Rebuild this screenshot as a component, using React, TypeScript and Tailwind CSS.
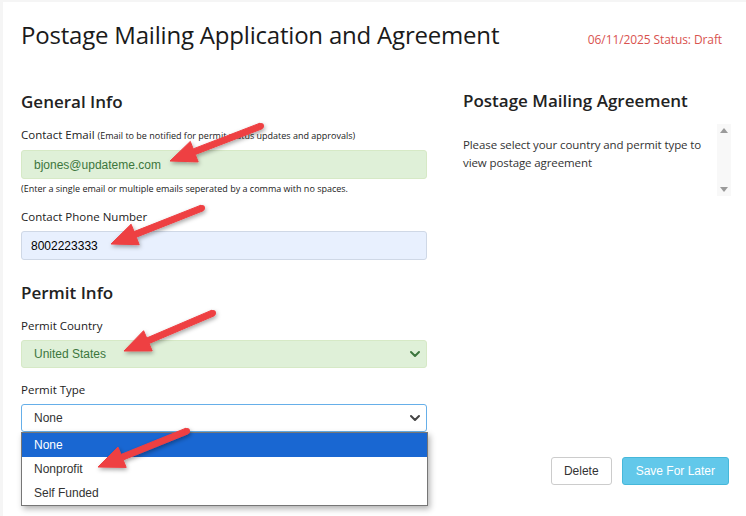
import React from 'react';

type Pt = [number, number];

function arrowPoints(tail: Pt, tip: Pt) {
  const dx = tip[0] - tail[0];
  const dy = tip[1] - tail[1];
  const len = Math.hypot(dx, dy);
  const ux = dx / len;
  const uy = dy / len;
  const nx = -uy;
  const ny = ux;
  const headLen = 26;
  const headW = 11;
  const shaftW = 3;
  const bx = tip[0] - ux * headLen;
  const by = tip[1] - uy * headLen;
  const pts: Pt[] = [
    [tail[0] + nx * shaftW, tail[1] + ny * shaftW],
    [bx + nx * shaftW, by + ny * shaftW],
    [bx + nx * headW, by + ny * headW],
    tip,
    [bx - nx * headW, by - ny * headW],
    [bx - nx * shaftW, by - ny * shaftW],
    [tail[0] - nx * shaftW, tail[1] - ny * shaftW],
  ];
  return pts.map((p) => `${p[0].toFixed(1)},${p[1].toFixed(1)}`).join(' ');
}

const arrows: { tail: Pt; tip: Pt }[] = [
  { tail: [261, 126], tip: [170, 161] },
  { tail: [202, 208], tip: [111, 244] },
  { tail: [213, 313], tip: [124, 351] },
  { tail: [187, 431], tip: [98, 467] },
];

function Arrows() {
  return (
    <svg className="absolute inset-0 z-20 pointer-events-none" width="746" height="516">
      <defs>
        <filter id="sh" x="-20%" y="-20%" width="140%" height="140%">
          <feDropShadow dx="1" dy="2" stdDeviation="2" floodColor="#000" floodOpacity="0.35" />
        </filter>
      </defs>
      {arrows.map((a, i) => (
        <g key={i} filter="url(#sh)">
          <polygon points={arrowPoints(a.tail, a.tip)} fill="#ee3f42" strokeLinejoin="round" stroke="#ee3f42" strokeWidth="1" />
          <circle cx={a.tail[0]} cy={a.tail[1]} r="3" fill="#ee3f42" />
        </g>
      ))}
    </svg>
  );
}

function Chevron({ color }: { color: string }) {
  return (
    <svg width="12" height="8" viewBox="0 0 12 8" className="absolute right-[5px] top-1/2 -translate-y-1/2">
      <path d="M2 2l4 4 4-4" fill="none" stroke={color} strokeWidth="2" strokeLinecap="round" strokeLinejoin="round" />
    </svg>
  );
}

const seg = { fontFamily: '"Open Sans", "Noto Sans", sans-serif' };
const arial = { fontFamily: '"Liberation Sans", Arial, sans-serif' };

export default function App() {
  return (
    <div className="relative w-[746px] h-[516px] overflow-hidden bg-[#f5f5f5] pl-[3px] pt-[2px]" style={seg}>
      <div className="h-full flex flex-col bg-white text-[#222] pl-[18px] pr-[24px]">
        <div className="flex items-start justify-between pt-[17px]">
          <h1 className="text-[24px] leading-[32px] tracking-[-0.2px] text-[#1a1a1a]">Postage Mailing Application and Agreement</h1>
          <div className="text-[12px] text-[#d9534f] mt-[12px] tracking-[-0.1px]">06/11/2025 Status: Draft</div>
        </div>

        <div className="flex flex-1 mt-[44px]">
          <div className="w-[406px]">
            <h2 className="text-[17px] font-semibold leading-[22px] -mt-[4px]">General Info</h2>
            <div className="mt-[14px] text-[11.5px] leading-[16px]">
              Contact Email <span className="text-[9px]">(Email to be notified for permit status updates and approvals)</span>
            </div>
            <div className="mt-[6px] h-[29px] rounded-[3px] border border-[#d6e9c6] bg-[#dff0d8] text-[#3c763d] text-[12px] flex items-center pl-[12px]" style={arial}>
              bjones@updateme.com
            </div>
            <div className="mt-[3px] text-[9px] leading-[14px]">(Enter a single email or multiple emails seperated by a comma with no spaces.</div>
            <div className="mt-[13px] text-[11.5px] leading-[16px]">Contact Phone Number</div>
            <div className="mt-[6px] h-[29px] rounded-[3px] border border-[#cfd8e6] bg-[#e8f0fe] text-black text-[12px] flex items-center pl-[9px]" style={arial}>
              8002223333
            </div>

            <h2 className="mt-[22px] text-[17px] font-semibold leading-[22px]">Permit Info</h2>
            <div className="mt-[14px] text-[11.5px] leading-[16px]">Permit Country</div>
            <div className="relative mt-[6px] h-[28px] rounded-[3px] border border-[#d6e9c6] bg-[#dff0d8] text-[#3c763d] text-[12px] flex items-center pl-[12px]" style={arial}>
              United States
              <Chevron color="#3c763d" />
            </div>
            <div className="mt-[14px] text-[11.5px] leading-[16px]">Permit Type</div>
            <div className="relative mt-[6px] h-[28px] rounded-[3px] border border-[#66afe9] bg-white text-[#333] text-[12px] flex items-center pl-[12px]" style={arial}>
              None
              <Chevron color="#444" />
            </div>
            <div className="relative z-10 w-[407px] border border-[#767676] bg-white text-[12px] shadow-[2px_3px_6px_rgba(0,0,0,0.3)]" style={arial}>
              <div className="h-[24px] flex items-center pl-[12px] bg-[#1967d2] text-white">None</div>
              <div className="h-[24px] flex items-center pl-[12px] text-[#333]">Nonprofit</div>
              <div className="h-[24px] flex items-center pl-[12px] text-[#333]">Self Funded</div>
            </div>
          </div>

          <div className="flex-1 pl-[36px] flex flex-col">
            <h2 className="text-[17px] font-semibold leading-[22px] -mt-[5px]">Postage Mailing Agreement</h2>
            <div className="mt-[12px] flex h-[72px] -mr-[9px]">
              <p className="flex-1 pt-[12px] text-[11.5px] leading-[18px] text-[#333] tracking-[-0.1px]">
                Please select your country and permit type to view postage agreement
              </p>
              <div className="w-[14px] bg-[#f8f8f8] flex flex-col items-center justify-between py-[4px]">
                <svg width="8" height="5" viewBox="0 0 8 5"><path d="M0 5L4 0 8 5z" fill="#9a9a9a" /></svg>
                <svg width="8" height="5" viewBox="0 0 8 5"><path d="M0 0L4 5 8 0z" fill="#9a9a9a" /></svg>
              </div>
            </div>
            <div className="mt-auto mb-[31px] -mr-[7px] flex justify-end gap-[10px]" style={arial}>
              <button className="h-[28px] px-[12px] rounded-[3px] border border-[#ccc] bg-white text-[#333] text-[12px]">Delete</button>
              <button className="h-[28px] px-[13px] rounded-[3px] border border-[#46b8da] bg-[#62c8ea] text-white text-[12px]">Save For Later</button>
            </div>
          </div>
        </div>
      </div>
      <Arrows />
    </div>
  );
}
